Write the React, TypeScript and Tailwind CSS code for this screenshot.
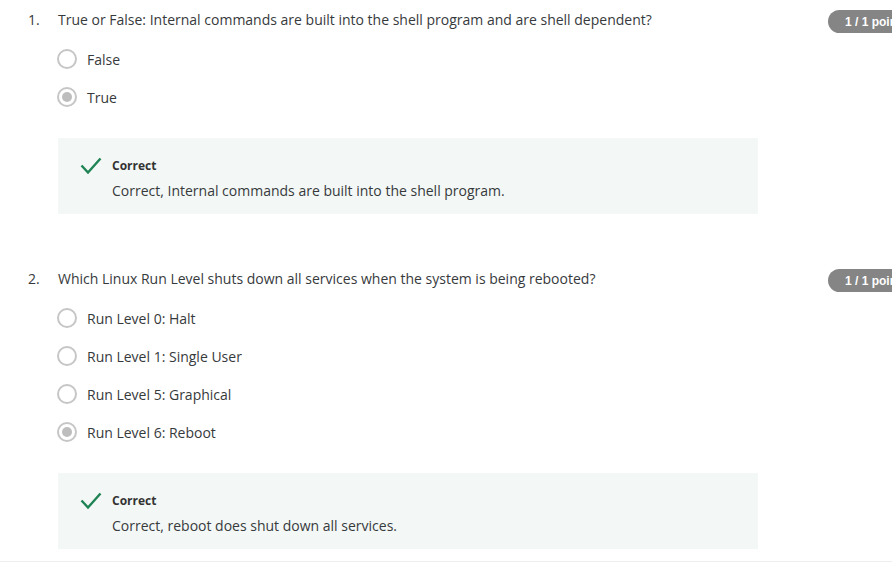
import React from "react";

type Question = {
  num: number;
  text: string;
  options: string[];
  selected: number;
  feedback: string;
};

const QUESTIONS: Question[] = [
  {
    num: 1,
    text: "True or False: Internal commands are built into the shell program and are shell dependent?",
    options: ["False", "True"],
    selected: 1,
    feedback: "Correct, Internal commands are built into the shell program.",
  },
  {
    num: 2,
    text: "Which Linux Run Level shuts down all services when the system is being rebooted?",
    options: [
      "Run Level 0: Halt",
      "Run Level 1: Single User",
      "Run Level 5: Graphical",
      "Run Level 6: Reboot",
    ],
    selected: 3,
    feedback: "Correct, reboot does shut down all services.",
  },
];

function Radio({ checked }: { checked: boolean }) {
  return (
    <span className="grid h-[20px] w-[20px] shrink-0 place-items-center rounded-full border-2 border-[#c6c6c6] bg-white">
      {checked && <span className="h-[10px] w-[10px] rounded-full bg-[#bdbdbd]" />}
    </span>
  );
}

function QuestionBlock({ q, first }: { q: Question; first: boolean }) {
  return (
    <div className={first ? "" : "mt-[45px]"}>
      <div className="flex w-[920px] items-start justify-between pt-[10px]">
        <div className="flex pl-[28px] text-[14px] leading-[20px] text-[#373a3c]">
          <span className="w-[30px] shrink-0">{q.num}.</span>
          <span>{q.text}</span>
        </div>
        <span className="flex h-[23px] w-[92px] shrink-0 items-center rounded-full bg-[#858585] pl-[17px] font-['Liberation_Sans',Arial,sans-serif] text-[12px] font-bold text-white">
          1 / 1 points
        </span>
      </div>

      <div className="ml-[57px] mt-[7px]">
        {q.options.map((o, i) => (
          <div key={o} className="flex h-[38px] items-center gap-[10px] text-[14px] text-[#373a3c]">
            <Radio checked={i === q.selected} />
            <span>{o}</span>
          </div>
        ))}
      </div>

      <div className="ml-[58px] mt-[22px] flex w-[700px] bg-[#f3f8f6] pb-[13px] pl-[22px] pt-[19px]">
        <svg width="22" height="18" viewBox="0 0 22 18" className="shrink-0">
          <polyline points="1.5,8.5 8,15.5 20.5,1.5" fill="none" stroke="#1f8354" strokeWidth="2.4" />
        </svg>
        <div className="ml-[10px]">
          <p className="text-[12px] font-bold leading-[18px] text-[#333]">Correct</p>
          <p className="mt-[6px] text-[14px] leading-[20px] text-[#373a3c]">{q.feedback}</p>
        </div>
      </div>
    </div>
  );
}

export default function App() {
  return (
    <div className="h-[562px] w-full overflow-hidden bg-white font-['Open_Sans','Noto_Sans',sans-serif]">
      {QUESTIONS.map((q, i) => (
        <QuestionBlock key={q.num} q={q} first={i === 0} />
      ))}
      <div className="mt-[12px] h-[2px] w-full bg-[#eeeeee]" />
    </div>
  );
}
